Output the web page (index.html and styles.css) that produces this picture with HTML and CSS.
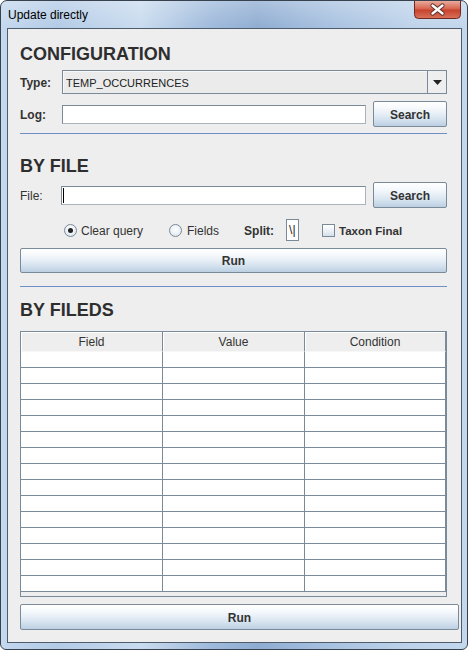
FILE: index.html
```html
<!DOCTYPE html>
<html>
<head>
<meta charset="utf-8">
<link rel="stylesheet" href="styles.css">
</head>
<body>
<div class="window">
  <div class="titlebar">
    <span class="title">Update directly</span>
    <div class="close">
      <svg width="47" height="19" viewBox="0 0 47 19">
        <defs>
          <linearGradient id="cg" x1="0" y1="0" x2="0" y2="1">
            <stop offset="0" stop-color="#eab3a6"/>
            <stop offset="0.45" stop-color="#d86a55"/>
            <stop offset="0.55" stop-color="#c8432c"/>
            <stop offset="1" stop-color="#d9735c"/>
          </linearGradient>
        </defs>
        <path d="M0.5 0 V14.5 A4 4 0 0 0 4.5 18.5 H42.5 A4 4 0 0 0 46.5 14.5 V0" fill="url(#cg)" stroke="#6e2a20"/>
        <path d="M18.5 5.5 L28.5 13.5 M28.5 5.5 L18.5 13.5" stroke="#5b2c28" stroke-width="4.2" stroke-linecap="round"/>
        <path d="M18.5 5.5 L28.5 13.5 M28.5 5.5 L18.5 13.5" stroke="#ffffff" stroke-width="2.4" stroke-linecap="round"/>
      </svg>
    </div>
  </div>
  <div class="client">
    <h2 class="heading h-config">CONFIGURATION</h2>
    <div class="row row-type">
      <span class="lbl bold">Type:</span>
      <div class="combo">
        <span class="combo-text">TEMP_OCCURRENCES</span>
        <span class="combo-arrow">
          <svg width="9" height="5" viewBox="0 0 9 5"><path d="M0 0 H9 L4.5 5 Z" fill="#222"/></svg>
        </span>
      </div>
    </div>
    <div class="row row-btn row-log">
      <span class="lbl bold">Log:</span>
      <div class="field"></div>
      <button class="btn btn-search">Search</button>
    </div>
    <div class="sep sep-1"></div>

    <h2 class="heading h-file">BY FILE</h2>
    <div class="row row-btn row-file">
      <span class="lbl lbl-file">File:</span>
      <div class="field"><span class="caret"></span></div>
      <button class="btn btn-search">Search</button>
    </div>
    <div class="row row-opts">
      <span class="opt opt-clear"><span class="radio checked"></span><span class="opt-text">Clear query</span></span>
      <span class="opt opt-fields"><span class="radio"></span><span class="opt-text">Fields</span></span>
      <span class="bold split-lbl">Split:</span>
      <span class="split-field">\|</span>
      <span class="opt opt-taxon"><span class="check"></span><span class="opt-text bold">Taxon Final</span></span>
    </div>
    <button class="btn btn-run btn-run-1">Run</button>
    <div class="sep sep-2"></div>

    <h2 class="heading h-fields">BY FILEDS</h2>
    <div class="table-pane">
      <table class="grid">
        <colgroup><col class="c1"><col class="c2"><col class="c3"></colgroup>
        <thead>
          <tr><th>Field</th><th>Value</th><th>Condition</th></tr>
        </thead>
        <tbody>
          <tr><td></td><td></td><td></td></tr>
          <tr><td></td><td></td><td></td></tr>
          <tr><td></td><td></td><td></td></tr>
          <tr><td></td><td></td><td></td></tr>
          <tr><td></td><td></td><td></td></tr>
          <tr><td></td><td></td><td></td></tr>
          <tr><td></td><td></td><td></td></tr>
          <tr><td></td><td></td><td></td></tr>
          <tr><td></td><td></td><td></td></tr>
          <tr><td></td><td></td><td></td></tr>
          <tr><td></td><td></td><td></td></tr>
          <tr><td></td><td></td><td></td></tr>
          <tr><td></td><td></td><td></td></tr>
          <tr><td></td><td></td><td></td></tr>
          <tr><td></td><td></td><td></td></tr>
        </tbody>
      </table>
    </div>
    <button class="btn btn-run btn-run-2">Run</button>
  </div>
</div>
</body>
</html>
```

FILE: styles.css
```css
* { box-sizing: border-box; }
html, body { margin: 0; padding: 0; background: #ffffff; }
body { font-family: "Liberation Sans", Arial, sans-serif; font-size: 12px; color: #333333; }

.window {
  width: 468px;
  height: 650px;
  border: 1px solid #38424f;
  border-radius: 7px 7px 6px 6px;
  background:
    linear-gradient(180deg, rgba(255,255,255,0.25) 0px, rgba(255,255,255,0) 27px),
    linear-gradient(90deg, #c4d8ee 0%, #b3cbe6 12%, #c9dbef 30%, #9fbadb 45%, #8fadd2 55%, #aac3e1 72%, #bed3ea 88%, #c3d7ed 100%);
  display: flex;
  flex-direction: column;
  overflow: hidden;
}

.titlebar {
  height: 27px;
  flex: 0 0 27px;
  display: flex;
  align-items: flex-start;
  justify-content: space-between;
}
.title {
  font-family: "Liberation Sans", Arial, sans-serif;
  font-size: 12px;
  color: #000000;
  padding-left: 7px;
  padding-top: 7px;
  line-height: 15px;
}
.close {
  margin-top: -1px;
  margin-right: 6px;
  width: 47px;
  height: 19px;
}
.close svg { display: block; }

.client {
  flex: 1;
  margin: 0 5px 6px 6px;
  border: 1px solid #4f5c6b;
  background: #eeeeee;
  padding: 0 14px 0 12px;
  display: flex;
  flex-direction: column;
}

.heading {
  margin: 0;
  font-family: "Liberation Sans", Arial, sans-serif;
  font-size: 18px;
  line-height: 24px;
  height: 22px;
  font-weight: bold;
  color: #2e2e2e;
}
.h-config { margin-top: 13px; }
.h-file { margin-top: 20px; }
.h-fields { margin-top: 11px; }

.row { display: flex; align-items: center; }
.row-type { margin-top: 6px; height: 24px; }
.row-log { margin-top: 7px; height: 26px; }
.row-file { margin-top: 6px; height: 26px; }

.lbl { width: 42px; flex: 0 0 42px; padding-top: 1px; }
.lbl-file { width: 41px; flex-basis: 41px; }
.bold { font-weight: bold; }

.combo {
  flex: 1;
  height: 24px;
  border: 1px solid #7a8a99;
  background: #ebebeb;
  box-shadow: inset 1px 1px 0 #f8f8f8;
  display: flex;
  align-items: center;
}
.combo-text {
  flex: 1;
  font-size: 11px;
  padding-left: 3px;
  padding-top: 1px;
  color: #222222;
}
.combo-arrow {
  width: 19px;
  height: 22px;
  border-left: 1px solid #7a8a99;
  display: flex;
  align-items: center;
  justify-content: center;
  background: #eeeeee;
}
.combo-arrow svg { display: block; margin-top: 1px; }

.field {
  flex: 1;
  height: 19px;
  border: 1px solid #7a8a99;
  border-right-color: #a9b3bd;
  border-bottom-color: #a9b3bd;
  background: #ffffff;
  margin-right: 7px;
  display: flex;
  align-items: center;
}
.caret {
  display: block;
  width: 1px;
  height: 15px;
  background: #000000;
  margin-left: 1px;
}

.btn {
  font-family: "Liberation Sans", Arial, sans-serif;
  font-size: 12px;
  font-weight: bold;
  color: #333333;
  border: 1px solid #7a8a99;
  border-radius: 2px;
  background: linear-gradient(180deg, #ffffff 0%, #f6f9fc 25%, #e6eef6 50%, #d3e1ee 75%, #bccfe2 100%);
  padding: 1px 0 0 0;
  margin: 0;
}
.btn-search { width: 74px; height: 26px; flex: 0 0 74px; }
.btn-run { height: 25px; width: 100%; display: block; flex: 0 0 25px; }
.btn-run-1 { margin-top: 7px; }
.btn-run-2 { margin-top: 7px; height: 26px; flex-basis: 26px; width: auto; margin-right: -12px; }

.sep { height: 1px; background: #6f8fc6; flex: 0 0 1px; }
.sep-1 { margin-top: 6px; }
.sep-2 { margin-top: 13px; }

.row-opts { margin-top: 11px; height: 22px; padding-top: 1px; }
.opt { display: flex; align-items: center; }
.opt-clear { margin-left: 44px; }
.opt-fields { margin-left: 26px; }
.split-lbl { margin-left: 25px; }
.split-field {
  margin-left: 12px;
  margin-top: -1px;
  width: 13px;
  height: 22px;
  border: 1px solid #7a8a99;
  background: #ffffff;
  color: #222;
  font-size: 12px;
  line-height: 20px;
  padding-left: 2px;
  overflow: hidden;
  white-space: nowrap;
}
.opt-taxon { margin-left: 23px; }
.opt-text { margin-left: 5px; }
.opt-clear .opt-text { margin-left: 4px; }
.opt-taxon .opt-text { margin-left: 4px; font-size: 11.5px; }

.radio {
  width: 13px;
  height: 13px;
  border-radius: 50%;
  border: 1px solid #7a8a99;
  background: radial-gradient(circle at 50% 40%, #ffffff 0%, #eef2f6 50%, #cfdbe7 100%);
  display: flex;
  align-items: center;
  justify-content: center;
}
.radio.checked::after {
  content: "";
  width: 5px;
  height: 5px;
  border-radius: 50%;
  background: #222222;
}
.check {
  width: 13px;
  height: 13px;
  border: 1px solid #7a8a99;
  background: linear-gradient(180deg, #ffffff 0%, #e9eff5 60%, #d3dfea 100%);
}

.h-fields + .table-pane { margin-top: 11px; }
.table-pane {
  height: 266px;
  border: 1px solid #7a8a99;
  background: #eeeeee;
  flex: 0 0 266px;
}
.grid {
  border-collapse: separate;
  border-spacing: 0;
  table-layout: fixed;
  width: 425px;
}
.c1 { width: 142px; }
.c2 { width: 142px; }
.c3 { width: 141px; }
.grid th {
  height: 20px;
  padding: 1px 0 0 0;
  font-weight: normal;
  font-size: 12px;
  color: #333333;
  background: #eeeeee;
  border-right: 1px solid #7a8a99;
  border-bottom: 1px solid #f7f7f7;
  box-shadow: inset 1px 1px 0 #ffffff;
  text-align: center;
  line-height: 18px;
}
.grid td {
  height: 16px;
  padding: 0;
  background: #ffffff;
  border-right: 1px solid #7a8a99;
  border-bottom: 1px solid #7a8a99;
}
```
